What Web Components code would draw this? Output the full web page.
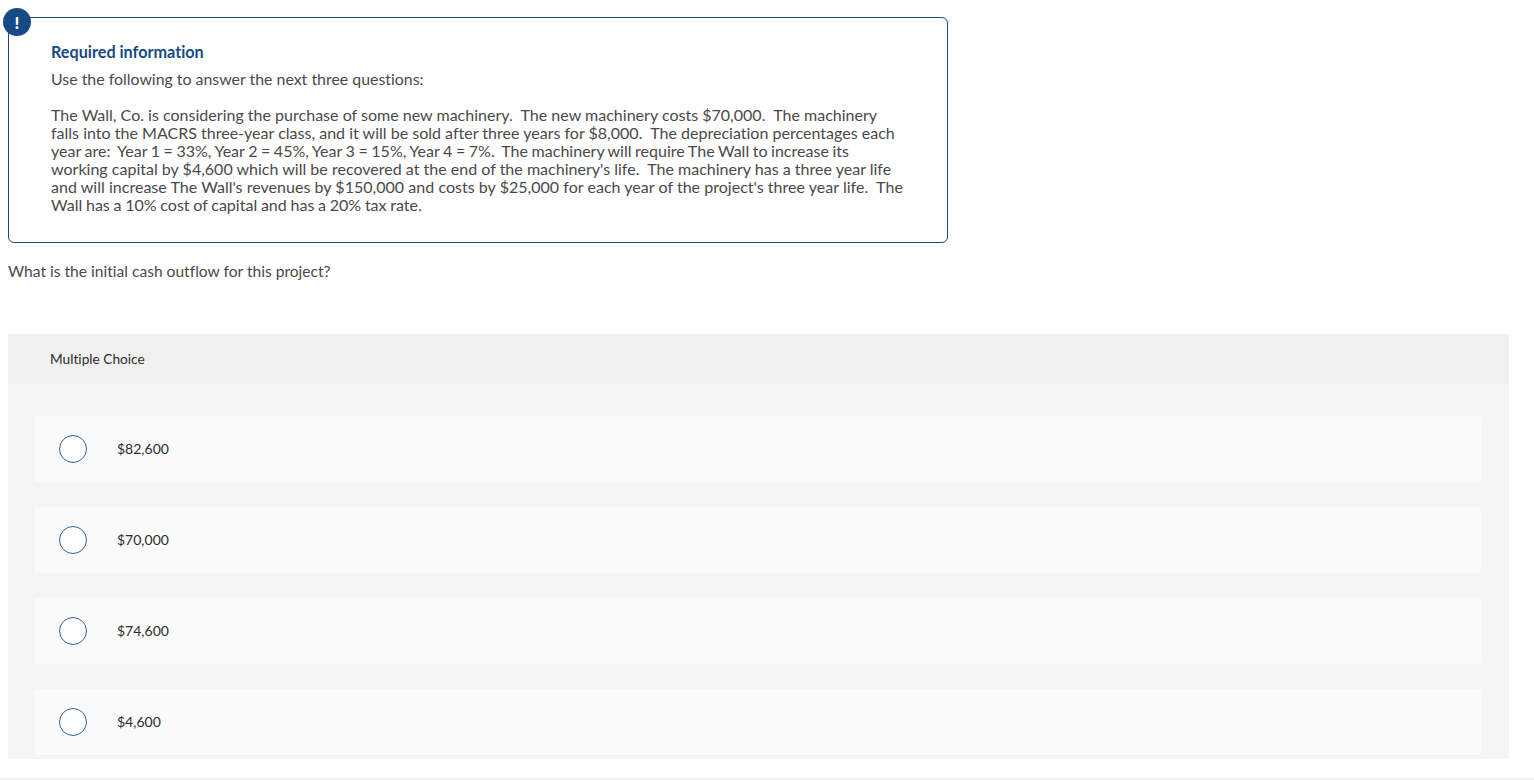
<!DOCTYPE html>
<html><head><meta charset="utf-8"><style>
html,body{margin:0;padding:0;background:#fff}
body{font-family:"Lato","Liberation Sans",sans-serif;color:#333;height:780px;overflow:hidden;font-variant-ligatures:none}
</style></head><body>
<template id="t-info"><style>
:host{display:block;position:relative;width:940px;height:226px;box-sizing:border-box;border:1px solid #154a85;border-radius:6px;padding:24px 42px 0;margin:17px 0 0 8px;font-size:16.05px;color:#4a4a4a}
.badge{position:absolute;left:-6px;top:-10px;width:28px;height:28px;border-radius:50%;background:#154a85;color:#fff;font-weight:900;font-size:17px;display:flex;align-items:center;justify-content:center}
h2{margin:0;font-size:16.2px;line-height:20px;font-weight:700;color:#154a85}
.use{line-height:20px;margin-top:7px;font-size:15.9px}
.p{line-height:18px;margin-top:17px;white-space:nowrap}
</style><div class="badge">!</div><h2>Required information</h2><div class="use"><slot name="use"></slot></div><div class="p"><slot></slot></div></template>
<template id="t-panel"><style>
:host{display:block;width:1501px;height:425px;margin:0 0 0 8px;background:#f5f5f5;border-radius:3px 3px 0 0;overflow:hidden}
.h{height:48px;padding-bottom:2px;background:#f0f0f0;padding-left:42px;display:flex;align-items:center;font-size:13.7px;color:#2d2d2d}
.b{display:flex;flex-direction:column;gap:25px;padding:32px 28px 0 26px}
</style><div class="h"><slot name="title"></slot></div><div class="b"><slot></slot></div></template>
<template id="t-choice"><style>
:host{display:flex;align-items:center;height:66px;background:#fafafa;border-radius:3px;padding-left:25px;font-size:14px;color:#2d2d2d}
i{display:block;width:28px;height:28px;box-sizing:border-box;border:1.5px solid #2f6496;border-radius:50%;background:#fff;margin-right:30px}
.t{padding-bottom:2px}
</style><i></i><span class="t"><slot></slot></span></template>
<template id="t-q"><style>:host{display:block;margin:18px 0 0 8px;font-size:15.6px;line-height:20px;color:#4a4a4a;height:73px}</style><slot></slot></template>
<template id="t-foot"><style>:host{display:block;height:2px;margin-top:19px;background:#f0f0f0}</style></template>

<info-box>
<span slot="use">Use the following to answer the next three questions:</span>
The Wall, Co. is considering the purchase of some new machinery.&nbsp; The new machinery costs $70,000.&nbsp; The machinery<br>
falls into the MACRS three-year class, and it will be sold after three years for $8,000.&nbsp; The depreciation percentages each<br>
<span style="word-spacing:-.55px">year are:&nbsp; Year 1 = 33%, Year 2 = 45%, Year 3 = 15%, Year 4 = 7%.&nbsp; The machinery will require The Wall to increase its</span><br>
working capital by $4,600 which will be recovered at the end of the machinery's life.&nbsp; The machinery has a three year life<br>
<span style="word-spacing:.1px">and will increase The Wall's revenues by $150,000 and costs by $25,000 for each year of the project's three year life.&nbsp; The</span><br>
<span style="word-spacing:-.4px">Wall has a 10% cost of capital and has a 20% tax rate.</span>
</info-box>
<q-text>What is the initial cash outflow for this project?</q-text>
<choice-panel>
<span slot="title">Multiple Choice</span>
<choice-row>$82,600</choice-row>
<choice-row>$70,000</choice-row>
<choice-row>$74,600</choice-row>
<choice-row>$4,600</choice-row>
</choice-panel>
<page-foot></page-foot>
<script>
for(const [n,t] of [['info-box','t-info'],['choice-panel','t-panel'],['choice-row','t-choice'],['q-text','t-q'],['page-foot','t-foot']]){
customElements.define(n,class extends HTMLElement{constructor(){super();this.attachShadow({mode:'open'}).appendChild(document.getElementById(t).content.cloneNode(true))}});
}
</script>
</body></html>
